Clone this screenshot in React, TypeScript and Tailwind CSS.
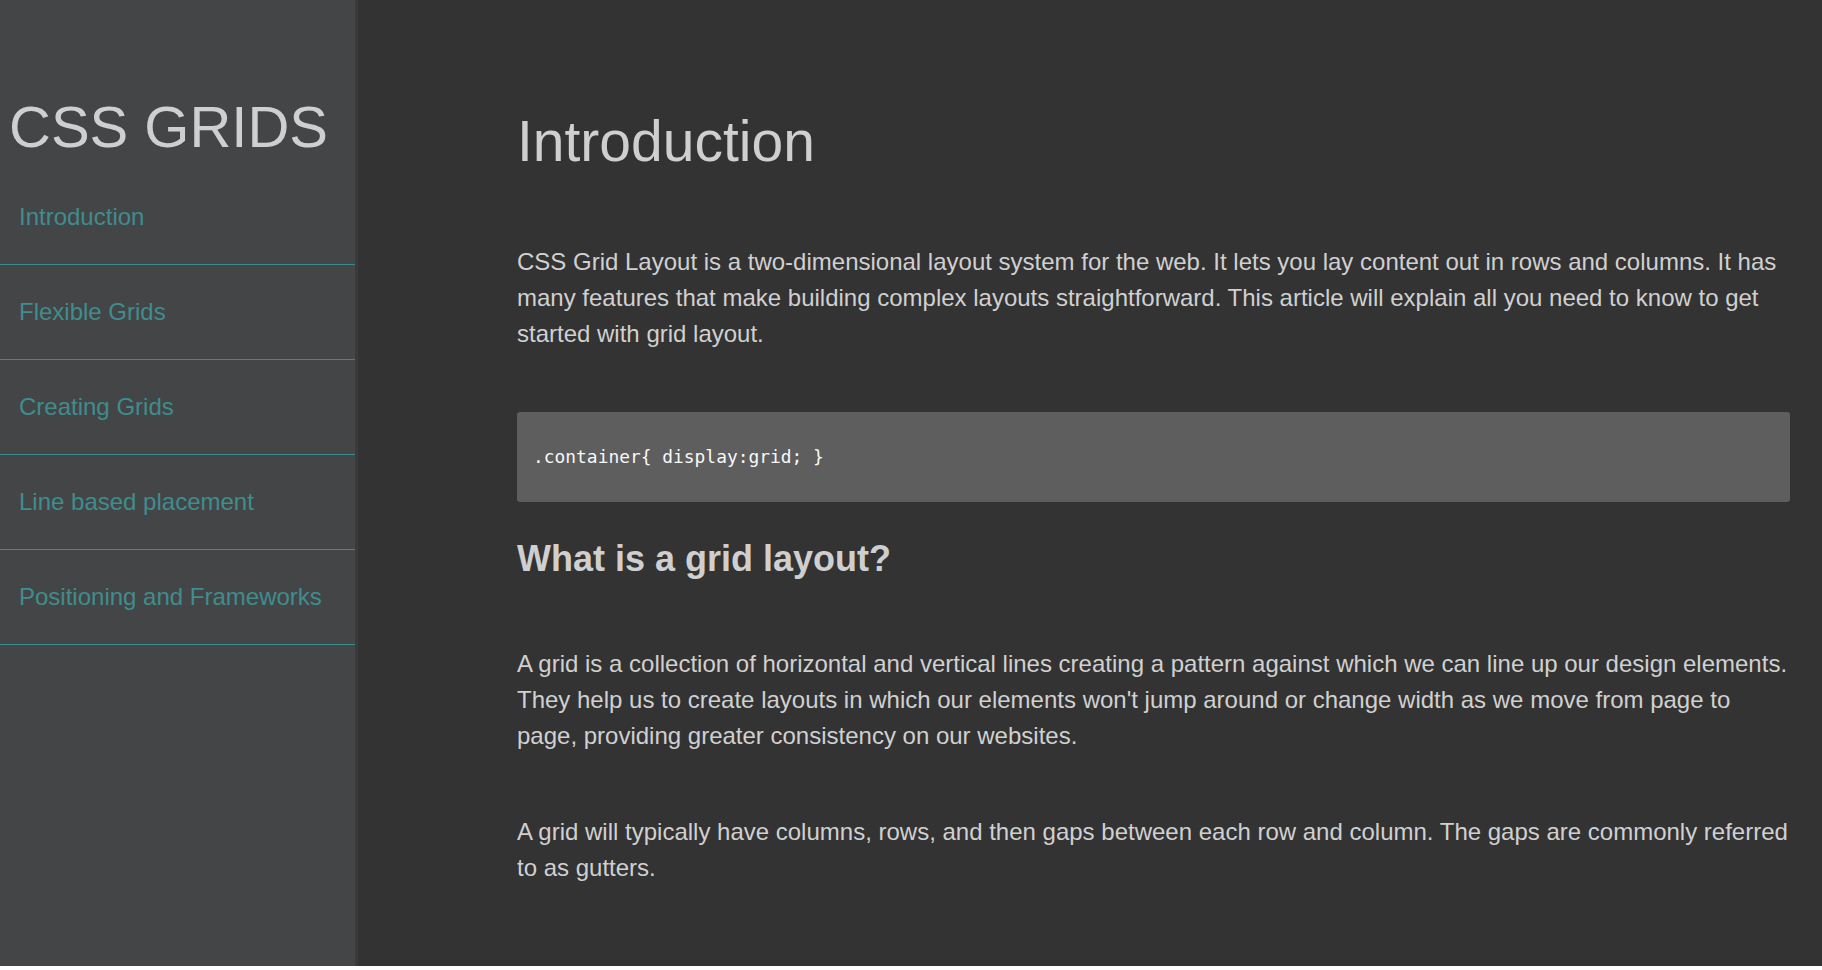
import React from "react";

const navItems = [
  "Introduction",
  "Flexible Grids",
  "Creating Grids",
  "Line based placement",
  "Positioning and Frameworks",
];

export default function App() {
  return (
    <div
      className="flex h-[966px] w-full bg-[#333333] text-[#d0d0d0]"
      style={{ fontFamily: '"Liberation Sans", Arial, sans-serif' }}
    >
      {/* Sidebar */}
      <aside className="w-[355px] shrink-0 bg-[#444547] shadow-[3px_0_0_#3b3b3c] pt-[94px]">
        <h1 className="pl-[9px] text-[58px] leading-[66px] text-[#cfcfcf]">CSS GRIDS</h1>
        <nav className="mt-[10px]">
          {navItems.map((item) => (
            <a
              key={item}
              href="#"
              className="block border-b border-[#3a8c8d] py-[34px] pl-[19px] text-[24px] leading-[26px] text-[#3f8d8d]"
            >
              {item}
            </a>
          ))}
        </nav>
      </aside>

      {/* Content */}
      <main className="flex-1 pl-[162px] pr-[32px] pt-[108px]">
        <h1 className="text-[57px] leading-[66px] text-[#cfcfcf]">Introduction</h1>

        <p className="mt-[70px] text-[24px] leading-[36px]">
          CSS Grid Layout is a two-dimensional layout system for the web. It lets you lay content out in rows and
          columns. It has many features that make building complex layouts straightforward. This article will explain
          all you need to know to get started with grid layout.
        </p>

        <div className="mt-[60px] flex h-[90px] items-center rounded-[3px] bg-[#5d5e5d] px-[16px]">
          <code
            className="text-[17.9px] text-[#f8f8f8]"
            style={{ fontFamily: '"DejaVu Sans Mono", "Liberation Mono", monospace' }}
          >
            .container{"{"} display:grid; {"}"}
          </code>
        </div>

        <h2 className="mt-[36px] text-[36px] font-bold leading-[41px] text-[#cfcfcf]">What is a grid layout?</h2>

        <p className="mt-[67px] text-[24px] leading-[36px]">
          A grid is a collection of horizontal and vertical lines creating a pattern against which we can line up our
          design elements. They help us to create layouts in which our elements won't jump around or change width as we
          move from page to page, providing greater consistency on our websites.
        </p>

        <p className="mt-[60px] text-[24px] leading-[36px]">
          A grid will typically have columns, rows, and then gaps between each row and column. The gaps are commonly
          referred to as gutters.
        </p>
      </main>
    </div>
  );
}
